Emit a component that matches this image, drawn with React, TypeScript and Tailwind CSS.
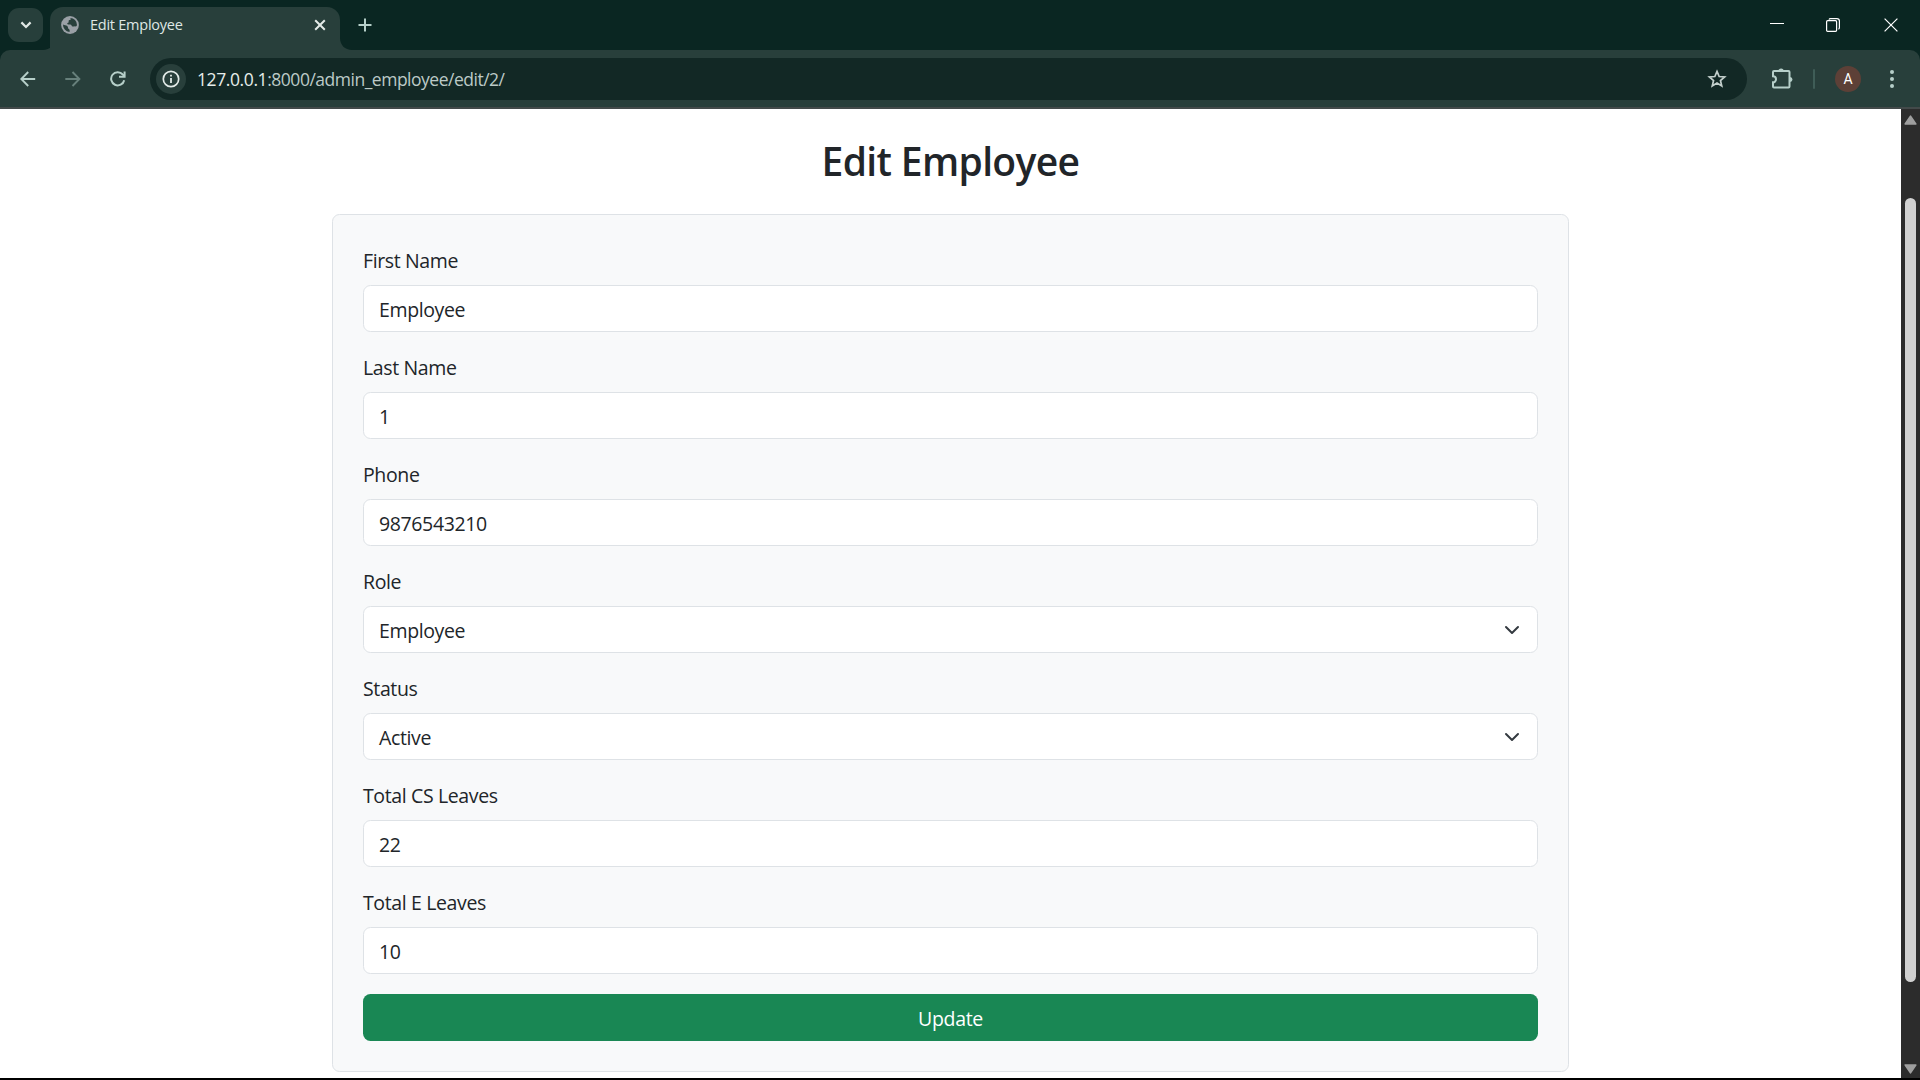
import React from "react";

const ui = "font-['Open_Sans','Noto_Sans',sans-serif]";

type Field = { label: string; value: string; select?: boolean };

const fields: Field[] = [
  { label: "First Name", value: "Employee" },
  { label: "Last Name", value: "1" },
  { label: "Phone", value: "9876543210" },
  { label: "Role", value: "Employee", select: true },
  { label: "Status", value: "Active", select: true },
  { label: "Total CS Leaves", value: "22" },
  { label: "Total E Leaves", value: "10" },
];

function TabStrip() {
  return (
    <div className="flex h-[50px] shrink-0 items-end bg-[#0a2622]">
      <div className="mb-2 ml-2 flex h-[34px] w-[35px] items-center justify-center rounded-[11px] bg-[#273f3b]">
        <svg width="12" height="8" viewBox="0 0 12 8" fill="none" stroke="#e0e8e5" strokeWidth="2.2">
          <path d="M1.4 1.4 6 6l4.6-4.6" />
        </svg>
      </div>
      <svg width="12" height="12" viewBox="0 0 12 12" className="-mr-[5px]">
        <path d="M12 0v12H0C7 12 12 7 12 0Z" fill="#283f3b" />
      </svg>
      <div className="flex h-[43px] w-[290px] items-center rounded-t-[13px] bg-[#283f3b] pb-[7px] pl-[11px] pr-[13px]">
        <svg width="18" height="18" viewBox="0 0 18 18">
          <circle cx="9" cy="9" r="8.9" fill="#9aa0a6" />
          <path
            d="M9.2 1.9c1 1.1.4 2-.6 2.1-1.2.2-1 1.3-.9 2 .1.9-1.4.6-1.5 1.6-.1 1 1.3 1 2.9 1 1.6 0 1.5 1.9 2.5 2 .9.1 1.9-.4 2.9-.2.9.2 1.2-.5 1.5-1.4A7.1 7.1 0 0 0 9.2 1.9ZM2 8.6c1.4.7 3.3.8 4.2 1.3 1.2.7.4 2.2 1.3 2.8.9.5 1.5.9 1 3.3A7.1 7.1 0 0 1 2 8.6Z"
            fill="#283f3b"
          />
        </svg>
        <span className="ml-[11px] flex-1 whitespace-nowrap text-[14.5px] leading-5 tracking-[-0.25px] text-[#dfe7e4]">
          Edit Employee
        </span>
        <svg width="14" height="14" viewBox="0 0 14 14" stroke="#e4ebe8" strokeWidth="2">
          <path d="m2.2 2.2 9.6 9.6M11.8 2.2l-9.6 9.6" />
        </svg>
      </div>
      <svg width="12" height="12" viewBox="0 0 12 12">
        <path d="M0 0v12h12C5 12 0 7 0 0Z" fill="#283f3b" />
      </svg>
      <svg width="14" height="14" viewBox="0 0 14 14" className="mb-[18px] ml-[6px]" stroke="#b6cfc9" strokeWidth="2">
        <path d="M7 .5v13M.5 7h13" />
      </svg>
      <div className="flex-1" />
      <div className="flex h-[50px] items-center">
        <svg width="14" height="14" viewBox="0 0 14 14" className="mr-[42px]" fill="#fff">
          <path d="M0 5h14v1H0z" />
        </svg>
        <svg width="14" height="14" viewBox="0 0 14 14" className="mr-[44px]" fill="none" stroke="#fff" strokeWidth="1.2">
          <rect x=".6" y="2.7" width="10" height="10.6" rx="1" />
          <path d="M3 1.6C3.2.9 3.6.6 4.5.6h6.400c1.6 0 2.5.9 2.5 2.5v6.4c0 .9-.3 1.4-1 1.6" />
        </svg>
        <svg width="14" height="14" viewBox="0 0 14 14" className="mr-[22px]" stroke="#fff" strokeWidth="1.2">
          <path d="m.6.6 12.8 12.8M13.4.6.6 13.4" />
        </svg>
      </div>
    </div>
  );
}

function Toolbar() {
  return (
    <div className="h-[59px] shrink-0 bg-[#0a2622]">
      <div className="flex h-[59px] items-start rounded-t-[10px] border-b-2 border-[#434a4a] bg-[#283f3b] pt-2">
        <div className="flex h-[42px] items-center">
          <svg width="16" height="16" viewBox="0 0 16 16" className="ml-5" fill="none" stroke="#b6cfc9" strokeWidth="1.9">
            <path d="M15.2 8H1.6M8.2 1 1.3 8l6.9 7" />
          </svg>
          <svg width="16" height="16" viewBox="0 0 16 16" className="ml-[29px]" fill="none" stroke="#67807b" strokeWidth="1.9">
            <path d="M.3 8h13.9M7.5 1l6.9 7-6.9 7" />
          </svg>
          <svg width="16" height="16" viewBox="0 0 16 16" className="ml-[29px]" fill="none" stroke="#b6cfc9" strokeWidth="2">
            <path d="M14.2 9.2A6.600 6.600 0 1 1 12.8 3.5L14.5 5.200" />
            <path d="M14.6.4v5.4H9" />
          </svg>
        </div>
        <div className="ml-[24px] flex h-[42px] w-[1597px] items-center rounded-full bg-[#122825] pl-[6px] pr-[20px]">
          <div className="flex size-[30px] items-center justify-center rounded-full bg-[#283f3b]">
            <svg width="18" height="18" viewBox="0 0 18 18" fill="none" stroke="#e3ebe8">
              <circle cx="9" cy="9" r="7.7" strokeWidth="1.7" />
              <path d="M9 8v5M9 4.8v1.8" strokeWidth="1.8" />
            </svg>
          </div>
          <div className="ml-[11px] flex-1 whitespace-nowrap text-[17.5px] leading-6 tracking-[-0.49px] text-[#bccac7]">
            <span className="tracking-[-0.4px] text-[#e6edea]">127.0.0.1</span>:8000/admin_employee/edit/2/
          </div>
          <svg width="20" height="20" viewBox="0 0 20 20" fill="none" stroke="#c3cfcc" strokeWidth="1.7">
            <path d="m10 2.4 2.15 5.1 5.5.45-4.2 3.6 1.3 5.4L10 14.05 5.25 16.95l1.3-5.4-4.2-3.6 5.5-.45Z" />
          </svg>
        </div>
        <div className="flex h-[42px] items-center">
          <svg width="21" height="21" viewBox="0 0 21 21" className="mb-px ml-[25px]" fill="none" stroke="#b6cfc9" strokeWidth="2">
            <path d="M2 3h14.500a1 1 0 0 1 1 1v14.500a1 1 0 0 1-1 1H2a1 1 0 0 1-1-1v-4.200a3 3 0 0 0 0-6V4a1 1 0 0 1 1-1Z" />
            <path d="M6.500 3a2.600 2.600 0 0 1 5.200 0ZM18 9a2.500 2.500 0 0 1 0 5Z" fill="#b6cfc9" stroke="none" />
          </svg>
          <div className="ml-[20px] h-5 w-[2px] rounded bg-[#3f5d57]" />
          <div className="ml-[20px] flex size-[26px] items-center justify-center rounded-full bg-[#5d4037] font-[Roboto,sans-serif] text-[14px] text-white">
            A
          </div>
          <svg width="4" height="18" viewBox="0 0 4 18" className="ml-[29px]" fill="#b6cfc9">
            <circle cx="2" cy="2" r="2" />
            <circle cx="2" cy="9" r="2" />
            <circle cx="2" cy="16" r="2" />
          </svg>
        </div>
      </div>
    </div>
  );
}

function FormField({ label, value, select }: Field) {
  return (
    <div className="mb-5">
      <label className="block h-[30px] whitespace-nowrap pt-px text-[19.5px] leading-[30px] tracking-[-0.37px]">{label}</label>
      <div className="mt-[10px] flex h-[47px] items-center justify-between rounded-[7.5px] border border-[#dee2e6] bg-white pl-[15px] pr-[17px]">
        <span className="whitespace-nowrap pt-[2px] text-[19.5px] leading-[30px] tracking-[-0.37px]">{value}</span>
        {select && (
          <svg width="16" height="16" viewBox="0 0 16 16" fill="none" stroke="#343a40" strokeWidth="2" strokeLinecap="round" strokeLinejoin="round">
            <path d="m2 5 6 6 6-6" />
          </svg>
        )}
      </div>
    </div>
  );
}

function Scrollbar() {
  return (
    <div className="flex w-[19px] shrink-0 flex-col items-center bg-[#2c2c2c]">
      <svg width="13" height="10" viewBox="0 0 13 10" className="mt-[6px] shrink-0">
        <path d="M6.5 1.2 11.8 9H1.2Z" fill="#9f9f9f" stroke="#9f9f9f" strokeWidth="1.6" strokeLinejoin="round" />
      </svg>
      <div className="mt-[73px] h-[784px] w-[11px] shrink-0 rounded-full bg-[#d1d1d1]" />
      <div className="flex-1" />
      <svg width="13" height="10" viewBox="0 0 13 10" className="mb-1 shrink-0">
        <path d="M6.5 8.8 1.2 1h10.6Z" fill="#9f9f9f" stroke="#9f9f9f" strokeWidth="1.6" strokeLinejoin="round" />
      </svg>
    </div>
  );
}

export default function App() {
  return (
    <div className={`flex h-[1080px] w-[1920px] flex-col overflow-hidden border-b-2 border-black bg-white ${ui}`}>
      <TabStrip />
      <Toolbar />
      <div className="flex min-h-0 flex-1">
        <main className="flex flex-1 flex-col items-center text-[#212529]">
          <h1 className="mt-[28px] h-12 whitespace-nowrap text-[39px] font-semibold leading-[48px] tracking-[-0.65px]">Edit Employee</h1>
          <form className="mt-[29px] flex h-[858px] w-[1237px] flex-col rounded-[7.5px] border border-[#dee2e6] bg-[#f8f9fa] p-[30px]">
            {fields.map((f) => (
              <FormField key={f.label} {...f} />
            ))}
            <button type="button" className="h-[47px] shrink-0 rounded-[7.5px] bg-[#198754] pt-[3px] text-[19.5px] leading-[30px] tracking-[-0.3px] text-white">
              Update
            </button>
          </form>
        </main>
        <Scrollbar />
      </div>
    </div>
  );
}
